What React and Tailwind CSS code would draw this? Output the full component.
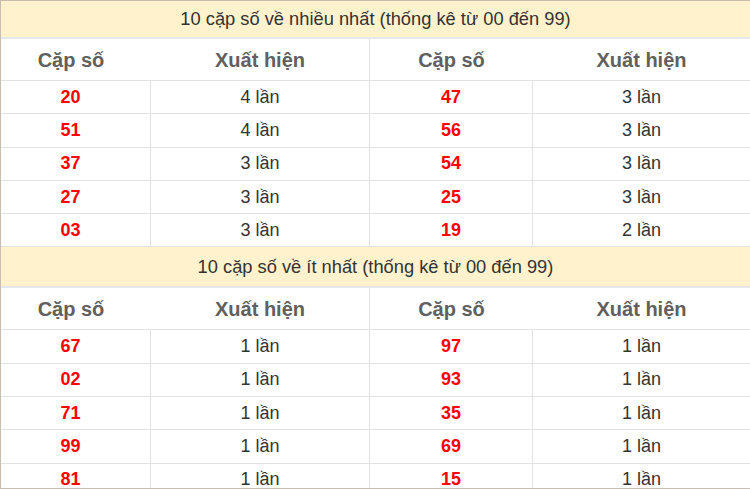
const most = [
  ['20', '4 lần', '47', '3 lần'],
  ['51', '4 lần', '56', '3 lần'],
  ['37', '3 lần', '54', '3 lần'],
  ['27', '3 lần', '25', '3 lần'],
  ['03', '3 lần', '19', '2 lần'],
]

const least = [
  ['67', '1 lần', '97', '1 lần'],
  ['02', '1 lần', '93', '1 lần'],
  ['71', '1 lần', '35', '1 lần'],
  ['99', '1 lần', '69', '1 lần'],
  ['81', '1 lần', '15', '1 lần'],
]

const cols = 'grid grid-cols-[150px_219px_163px_217px]'

function Section({ title, rows, tall }) {
  return (
    <div>
      <div className={`${tall ? 'h-[41px]' : 'h-[38px]'} bg-[#fff2cc] border-b-2 border-[#e4e7ec] flex items-center justify-center text-[18.3px] text-[#333]`}>
        {title}
      </div>
      <div className={`${cols} h-[42px] border-b border-[#e2e2e2] text-[20px] font-bold text-[#606060]`}>
        <div className="flex items-center justify-center pr-[10px]">Cặp số</div>
        <div className="flex items-center justify-center border-r border-[#e2e2e2]">Xuất hiện</div>
        <div className="flex items-center justify-center">Cặp số</div>
        <div className="flex items-center justify-center">Xuất hiện</div>
      </div>
      {rows.map((r, i) => (
        <div key={i} className={`${cols} h-[33.3px] border-b border-[#e2e2e2] text-[18px]`}>
          <div className="flex items-center justify-center pr-[10px] border-r border-[#e2e2e2] font-bold text-[#ff0000]">{r[0]}</div>
          <div className="flex items-center justify-center border-r border-[#e2e2e2] text-[#333]">{r[1]}</div>
          <div className="flex items-center justify-center border-r border-[#e2e2e2] font-bold text-[#ff0000]">{r[2]}</div>
          <div className="flex items-center justify-center text-[#333]">{r[3]}</div>
        </div>
      ))}
    </div>
  )
}

export default function App() {
  return (
    <div className="w-[750px] h-[489px] overflow-hidden bg-white border-l border-t border-b border-[#c9bdb2] font-['Liberation_Sans',Arial,sans-serif]">
      <Section title="10 cặp số về nhiều nhất (thống kê từ 00 đến 99)" rows={most} />
      <Section title="10 cặp số về ít nhất (thống kê từ 00 đến 99)" rows={least} tall />
    </div>
  )
}
